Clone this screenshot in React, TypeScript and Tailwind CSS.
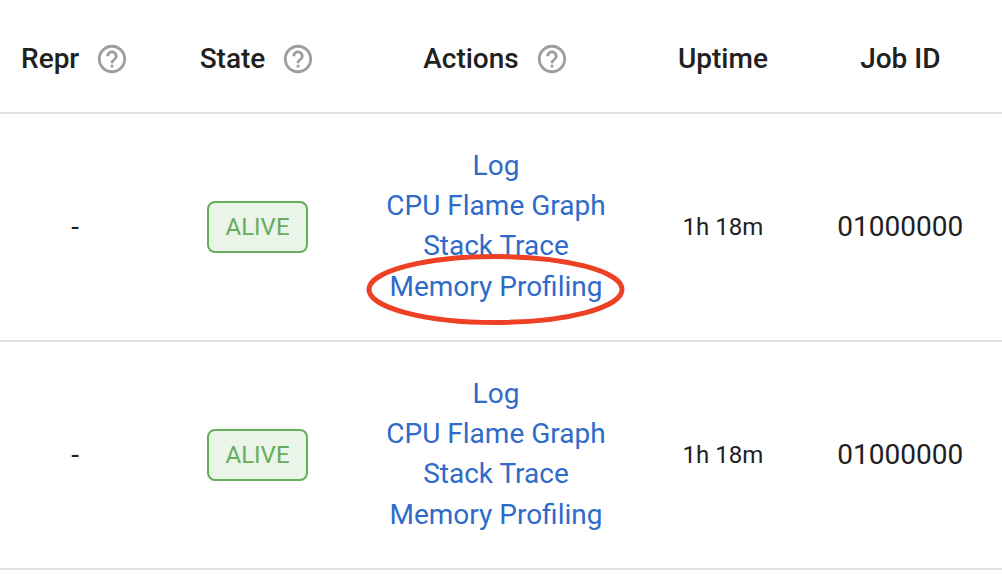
import { MdHelpOutline } from "react-icons/md";

type Actor = {
  id: number;
  repr: string;
  state: string;
  uptime: string;
  jobId: string;
  highlighted: boolean;
};

const columns = [
  { label: "Repr", help: true, width: "w-[15%]" },
  { label: "State", help: true, width: "w-[21.4%]" },
  { label: "Actions", help: true, width: "w-[26.2%]" },
  { label: "Uptime", help: false, width: "w-[19.1%]" },
  { label: "Job ID", help: false, width: "w-[18.3%] pr-5" },
];

const actors: Actor[] = [
  { id: 1, repr: "-", state: "ALIVE", uptime: "1h 18m", jobId: "01000000", highlighted: true },
  { id: 2, repr: "-", state: "ALIVE", uptime: "1h 18m", jobId: "01000000", highlighted: false },
];

function HeaderCell({ label, help, width }: (typeof columns)[number]) {
  return (
    <th scope="col" className={`${width} h-[113px] pt-1.5 font-medium`}>
      <div className="flex items-center justify-center gap-4">
        {label}
        {help && (
          <button type="button" aria-label={`About ${label}`} className="text-[#9e9e9e]">
            <MdHelpOutline className="size-[34px]" />
          </button>
        )}
      </div>
    </th>
  );
}

function Highlight() {
  return (
    <svg
      aria-hidden="true"
      viewBox="0 0 260 80"
      className="pointer-events-none absolute top-1/2 left-1/2 h-20 w-[260px] max-w-none -translate-x-1/2 -translate-y-1/2"
    >
      <ellipse cx="129.5" cy="42.5" rx="126.5" ry="33" fill="none" stroke="#ee4023" strokeWidth="5" />
    </svg>
  );
}

function ActorRow({ actor }: { actor: Actor }) {
  return (
    <tr className="border-b-2 border-[#e0e0e0]">
      <td>{actor.repr}</td>
      <td>
        <span className="inline-flex h-[52px] items-center rounded-lg border-2 border-[#66ad5b] bg-[#ebf4e9] px-4 align-middle text-2xl text-[#66ad5b]">
          {actor.state}
        </span>
      </td>
      <td className="py-8 text-[#2f6bc9]">
        <div className="flex flex-col items-center whitespace-nowrap">
          <a href="#log" className="leading-10">Log</a>
          <a href="#cpu-flame-graph" className="leading-10">CPU Flame Graph</a>
          <a href="#stack-trace" className="leading-10">Stack Trace</a>
          <a href="#memory-profiling" className="relative leading-[42px]">
            Memory Profiling
            {actor.highlighted && <Highlight />}
          </a>
        </div>
      </td>
      <td className="text-2xl">{actor.uptime}</td>
      <td className="pr-5">{actor.jobId}</td>
    </tr>
  );
}

export default function App() {
  return (
    <main className="min-h-screen bg-white font-['Roboto',sans-serif] text-[28px] leading-10 text-[#212121]">
      <table className="w-full table-fixed border-collapse text-center">
        <thead>
          <tr className="border-b-2 border-[#e0e0e0]">
            {columns.map((column) => (
              <HeaderCell key={column.label} {...column} />
            ))}
          </tr>
        </thead>
        <tbody>
          {actors.map((actor) => (
            <ActorRow key={actor.id} actor={actor} />
          ))}
        </tbody>
      </table>
    </main>
  );
}
